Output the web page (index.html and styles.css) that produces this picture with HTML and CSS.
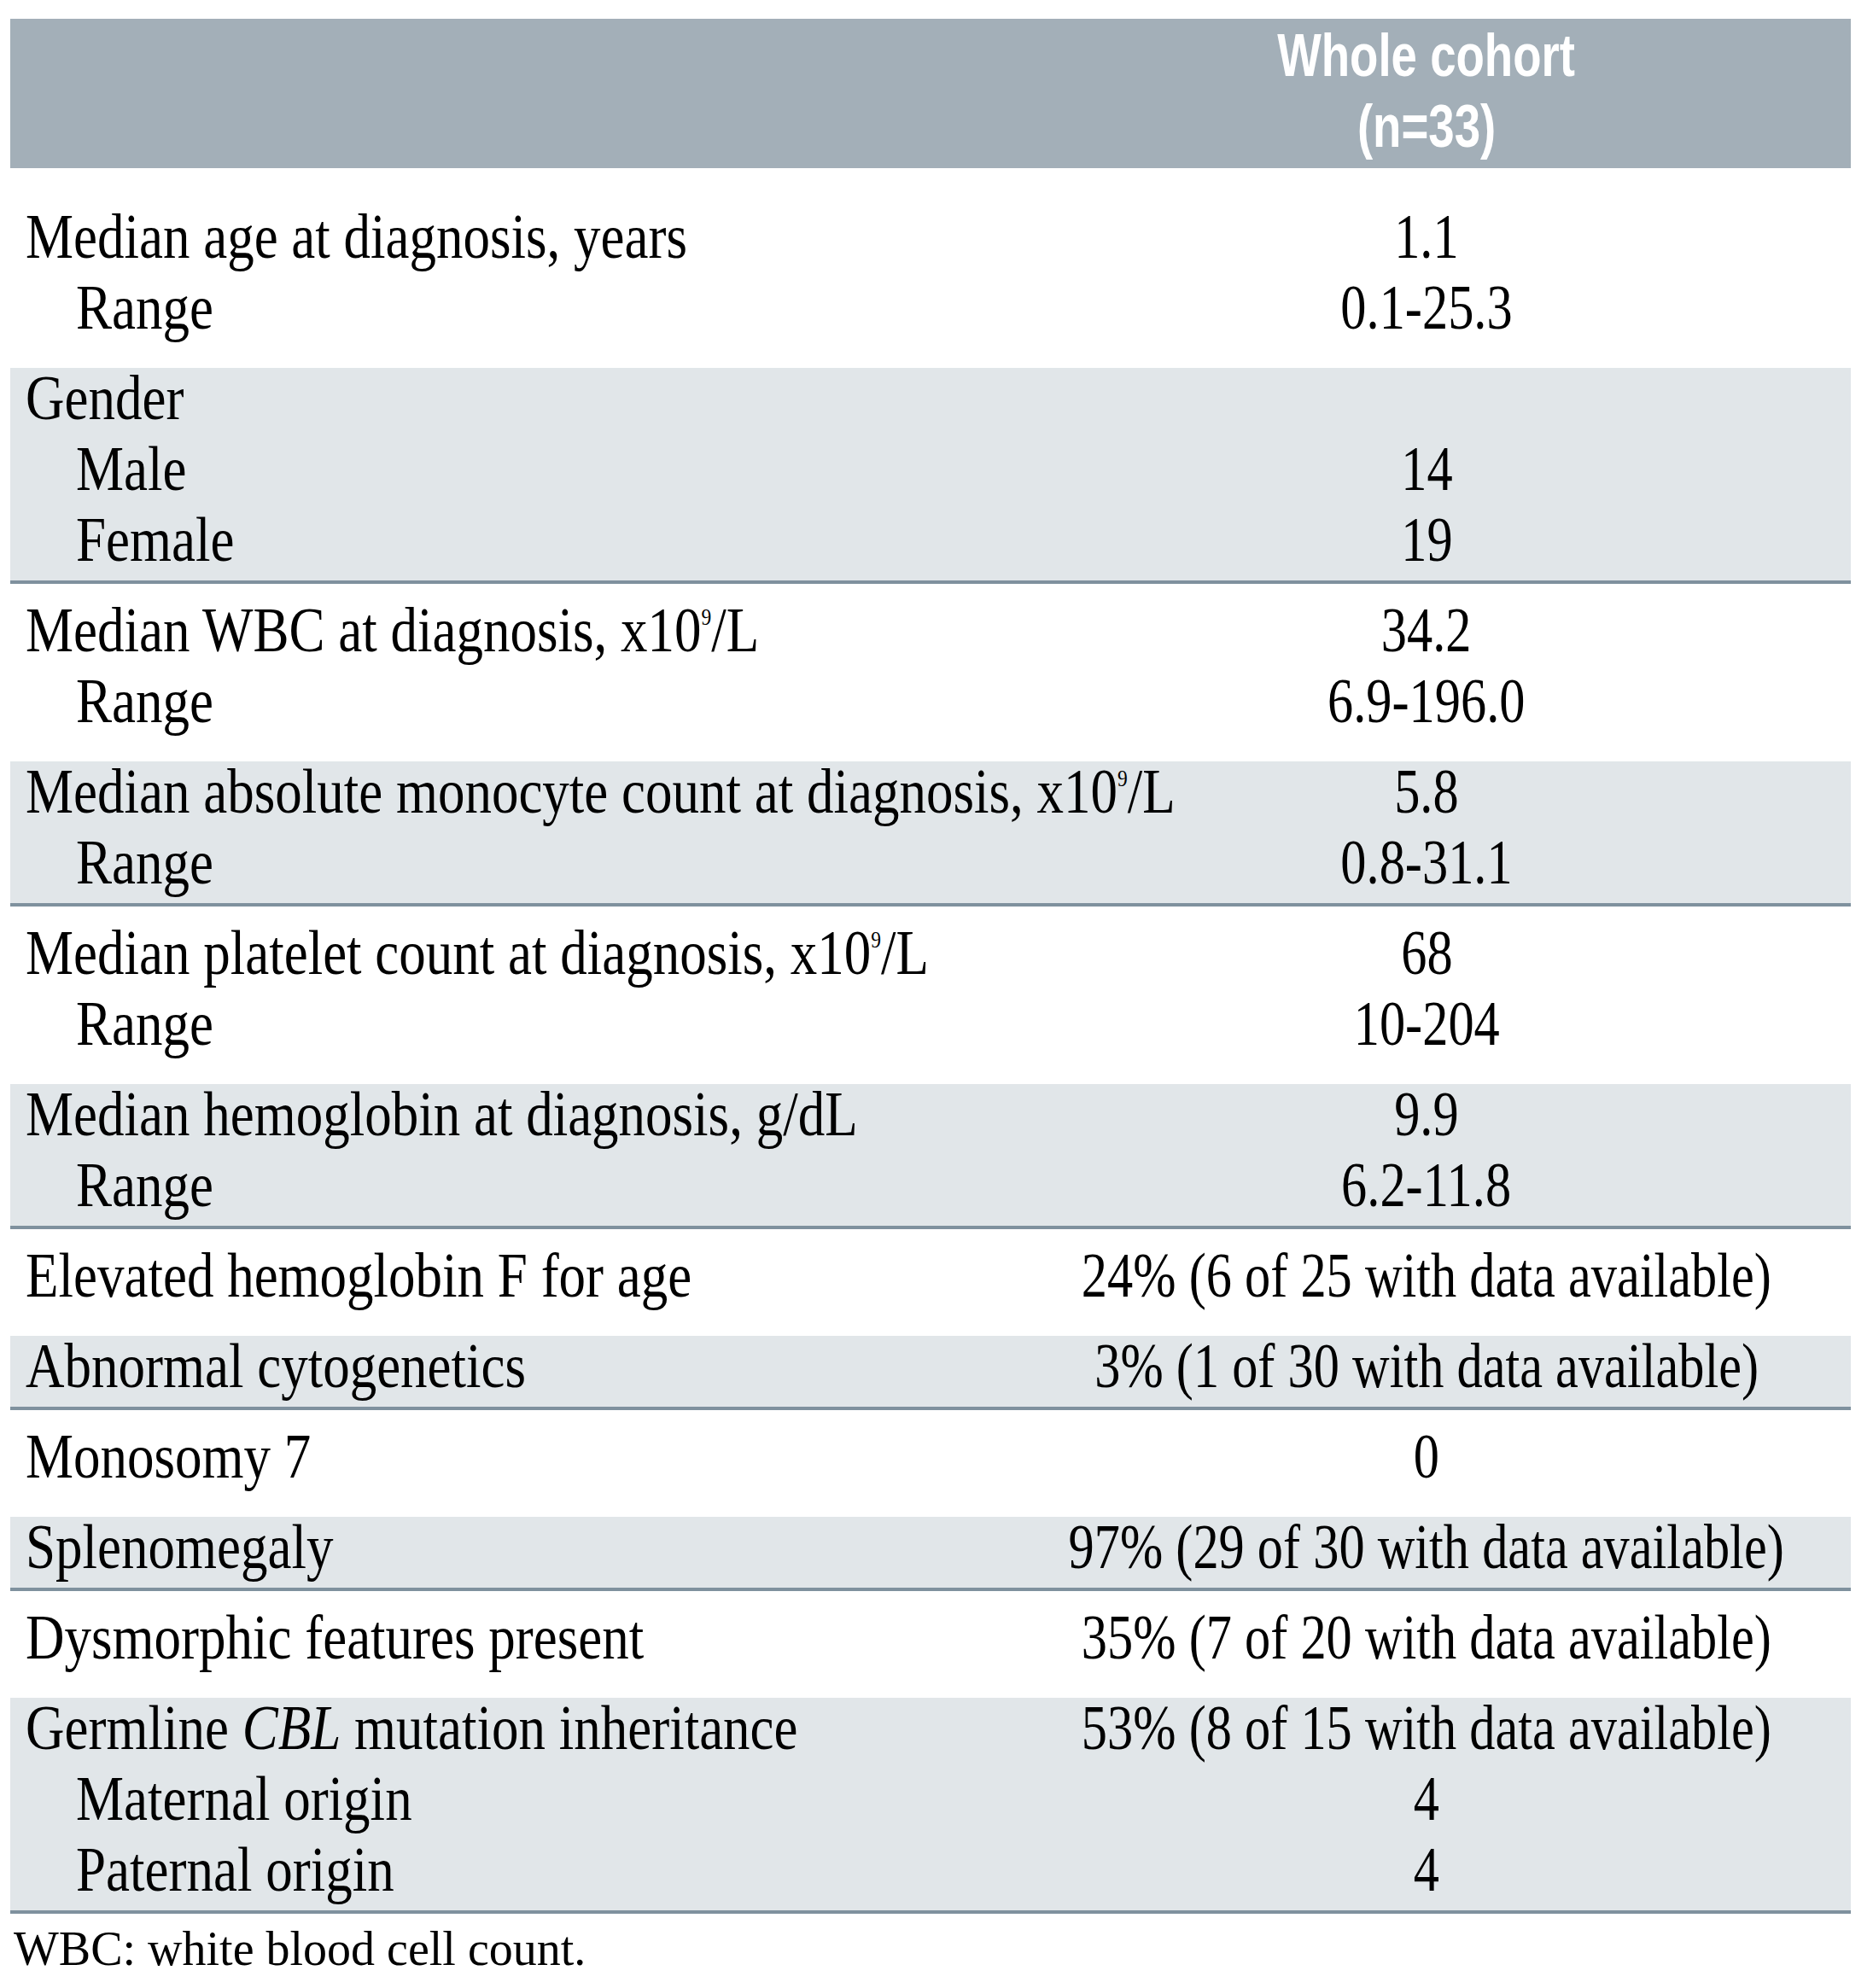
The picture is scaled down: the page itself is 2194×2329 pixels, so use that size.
FILE: index.html
```html
<!DOCTYPE html>
<html lang="en">
<head>
<meta charset="utf-8">
<title>Whole cohort characteristics</title>
<link rel="stylesheet" href="styles.css">
</head>
<body>
<div class="page">
  <div class="table">
    <div class="row head">
      <div class="cell c1"></div>
      <div class="cell hc2">
        <span class="ht">Whole cohort</span>
        <span class="ht">(n=33)</span>
      </div>
    </div>

    <div class="row first">
      <div class="cell c1">
        <div class="ln"><span class="t">Median age at diagnosis, years</span></div>
        <div class="ln sub"><span class="t">Range</span></div>
      </div>
      <div class="cell c2">
        <div class="ln"><span class="t">1.1</span></div>
        <div class="ln"><span class="t">0.1-25.3</span></div>
      </div>
    </div>

    <div class="row g">
      <div class="cell c1">
        <div class="ln"><span class="t">Gender</span></div>
        <div class="ln sub"><span class="t">Male</span></div>
        <div class="ln sub"><span class="t">Female</span></div>
      </div>
      <div class="cell c2">
        <div class="ln"></div>
        <div class="ln"><span class="t">14</span></div>
        <div class="ln"><span class="t">19</span></div>
      </div>
    </div>

    <div class="row w">
      <div class="cell c1">
        <div class="ln"><span class="t">Median WBC at diagnosis, x10<span class="sup">9</span>/L</span></div>
        <div class="ln sub"><span class="t">Range</span></div>
      </div>
      <div class="cell c2">
        <div class="ln"><span class="t">34.2</span></div>
        <div class="ln"><span class="t">6.9-196.0</span></div>
      </div>
    </div>

    <div class="row g">
      <div class="cell c1">
        <div class="ln"><span class="t">Median absolute monocyte count at diagnosis, x10<span class="sup">9</span>/L</span></div>
        <div class="ln sub"><span class="t">Range</span></div>
      </div>
      <div class="cell c2">
        <div class="ln"><span class="t">5.8</span></div>
        <div class="ln"><span class="t">0.8-31.1</span></div>
      </div>
    </div>

    <div class="row w">
      <div class="cell c1">
        <div class="ln"><span class="t">Median platelet count at diagnosis, x10<span class="sup">9</span>/L</span></div>
        <div class="ln sub"><span class="t">Range</span></div>
      </div>
      <div class="cell c2">
        <div class="ln"><span class="t">68</span></div>
        <div class="ln"><span class="t">10-204</span></div>
      </div>
    </div>

    <div class="row g">
      <div class="cell c1">
        <div class="ln"><span class="t">Median hemoglobin at diagnosis, g/dL</span></div>
        <div class="ln sub"><span class="t">Range</span></div>
      </div>
      <div class="cell c2">
        <div class="ln"><span class="t">9.9</span></div>
        <div class="ln"><span class="t">6.2-11.8</span></div>
      </div>
    </div>

    <div class="row w">
      <div class="cell c1">
        <div class="ln"><span class="t">Elevated hemoglobin F for age</span></div>
      </div>
      <div class="cell c2">
        <div class="ln"><span class="t">24% (6 of 25 with data available)</span></div>
      </div>
    </div>

    <div class="row g">
      <div class="cell c1">
        <div class="ln"><span class="t">Abnormal cytogenetics</span></div>
      </div>
      <div class="cell c2">
        <div class="ln"><span class="t">3% (1 of 30 with data available)</span></div>
      </div>
    </div>

    <div class="row w">
      <div class="cell c1">
        <div class="ln"><span class="t">Monosomy 7</span></div>
      </div>
      <div class="cell c2">
        <div class="ln"><span class="t">0</span></div>
      </div>
    </div>

    <div class="row g">
      <div class="cell c1">
        <div class="ln"><span class="t">Splenomegaly</span></div>
      </div>
      <div class="cell c2">
        <div class="ln"><span class="t">97% (29 of 30 with data available)</span></div>
      </div>
    </div>

    <div class="row w">
      <div class="cell c1">
        <div class="ln"><span class="t">Dysmorphic features present</span></div>
      </div>
      <div class="cell c2">
        <div class="ln"><span class="t">35% (7 of 20 with data available)</span></div>
      </div>
    </div>

    <div class="row g">
      <div class="cell c1">
        <div class="ln"><span class="t">Germline <i>CBL</i> mutation inheritance</span></div>
        <div class="ln sub"><span class="t">Maternal origin</span></div>
        <div class="ln sub"><span class="t">Paternal origin</span></div>
      </div>
      <div class="cell c2">
        <div class="ln"><span class="t">53% (8 of 15 with data available)</span></div>
        <div class="ln"><span class="t">4</span></div>
        <div class="ln"><span class="t">4</span></div>
      </div>
    </div>
  </div>
  <p class="note">WBC: white blood cell count.</p>
</div>
</body>
</html>
```

FILE: styles.css
```css
html, body {
  margin: 0;
  padding: 0;
  background: #ffffff;
}

body {
  font-family: "Liberation Serif", "Times New Roman", serif;
  color: #000000;
}

.page {
  padding: 22px 26px 0 12px;
}

.table {
  display: flex;
  flex-direction: column;
}

.row {
  display: grid;
  grid-template-columns: 1162px minmax(0, 1fr);
}

.cell {
  min-width: 0;
}

/* header */
.head {
  background: #a3afb8;
  padding: 2px 0 7px;
}

.hc2 {
  display: flex;
  flex-direction: column;
  align-items: center;
  color: #ffffff;
  font-family: "Liberation Sans", Arial, sans-serif;
  font-weight: 700;
  font-size: 70px;
  line-height: 83px;
}

.ht {
  display: block;
  white-space: nowrap;
  transform: scaleX(0.78);
  transform-origin: 50% 50%;
}

/* body rows */
.first {
  padding: 38px 0 30px;
}

.w {
  padding: 12px 0 30px;
}

.g {
  background: #e1e6e9;
  border-bottom: 4px solid #7f919e;
}

.g > .cell {
  margin: -7px 0 7px;
}

.ln {
  height: 83px;
  font-size: 75px;
  line-height: 83px;
  white-space: nowrap;
}

.c1 .ln {
  padding-left: 18px;
}

.c1 .ln.sub {
  padding-left: 77px;
}

.t {
  display: inline-block;
  transform: scaleX(0.84);
  transform-origin: 0 50%;
}

.c2 .ln {
  display: flex;
  justify-content: center;
}

.c2 .t {
  transform: scaleX(0.805);
  transform-origin: 50% 50%;
}

.sup {
  font-size: 28px;
  line-height: 0;
  vertical-align: 31px;
}

.note {
  margin: 9px 0 0;
  padding-left: 4px;
  font-size: 56px;
  line-height: 64px;
  white-space: nowrap;
}
```
